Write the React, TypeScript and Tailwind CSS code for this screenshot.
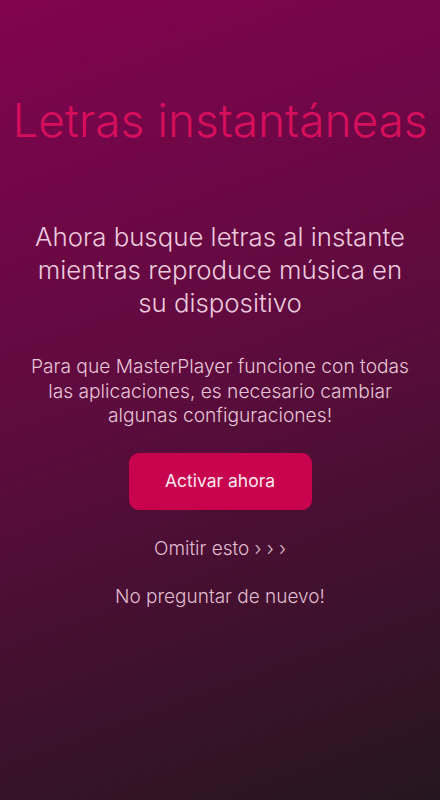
import React from 'react';

export default function App() {
  return (
    <div
      className="w-[440px] h-[800px] bg-[linear-gradient(160deg,#82034f_0%,#5e0b3e_45%,#25161f_100%)] flex flex-col items-center text-center"
      style={{ fontFamily: 'Inter, "Noto Sans", sans-serif' }}
    >
      <h1 className="mt-[93px] text-[46px] leading-[54px] font-light text-[#d60f5c] tracking-[0px] whitespace-nowrap">
        Letras instantáneas
      </h1>

      <p className="mt-[73px] w-[384px] text-[25.8px] leading-[33px] text-[#ecc9dd] font-light">
        Ahora busque letras al instante mientras reproduce música en su dispositivo
      </p>

      <p className="mt-[35px] w-[400px] text-[19.2px] leading-[24.5px] text-[#e6c3d6] font-light">
        Para que MasterPlayer funcione con todas las aplicaciones, es necesario cambiar algunas configuraciones!
      </p>

      <button
        type="button"
        className="mt-[25px] w-[183px] h-[57px] rounded-[10px] bg-[#c9044f] text-[17.5px] text-[#fbe8f0]"
      >
        Activar ahora
      </button>

      <button type="button" className="mt-[27px] text-[19px] leading-[24px] text-[#e0bccf] font-light">
        Omitir esto › › ›
      </button>

      <button type="button" className="mt-[24px] text-[19px] leading-[24px] text-[#e0bccf] font-light">
        No preguntar de nuevo!
      </button>
    </div>
  );
}
